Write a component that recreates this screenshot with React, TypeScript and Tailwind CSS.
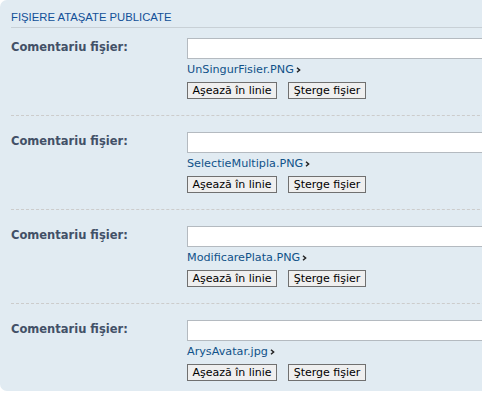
import React from 'react';

const files = [
  'UnSingurFisier.PNG',
  'SelectieMultipla.PNG',
  'ModificarePlata.PNG',
  'ArysAvatar.jpg',
];

function Arrow() {
  return (
    <svg width="5" height="6" viewBox="0 0 5 6" className="ml-[2px] inline-block">
      <path d="M1 0.8 L3.6 3 L1 5.2" fill="none" stroke="#222" strokeWidth="1.5" />
    </svg>
  );
}

function AttachRow({ name, first, last }: { name: string; first: boolean; last: boolean }) {
  return (
    <div
      className={
        'flex ' +
        (first ? 'pt-[10px] ' : 'pt-[16px] border-t border-dashed border-[#cccccc] ') +
        (last ? 'pb-[10px]' : 'pb-[16px]')
      }
    >
      {/* label */}
      <div className="w-[176px] shrink-0 pt-[2px] text-[11.5px] leading-[14px] font-bold text-[#425067]">
        Comentariu fişier:
      </div>

      {/* field + file + actions */}
      <div className="flex-1 flex flex-col">
        <input type="text" className="h-[21px] w-full bg-white border border-[#b4bac0] outline-none" />
        <div className="mt-[3px] h-[16px] flex items-center text-[11.2px] leading-[16px] text-[#105289]">
          <span>{name}</span>
          <Arrow />
        </div>
        <div className="mt-[4px] flex gap-[11px]">
          <button className="h-[17px] w-[90px] border border-[#707070] bg-[#efefef] text-[11px] leading-[15px] text-black">
            Aşează în linie
          </button>
          <button className="h-[17px] w-[78px] border border-[#707070] bg-[#efefef] text-[11px] leading-[15px] text-black">
            Şterge fişier
          </button>
        </div>
      </div>
    </div>
  );
}

export default function App() {
  return (
    <div className="w-[482px] h-[393px] overflow-hidden bg-white" style={{ fontFamily: '"DejaVu Sans", Verdana, sans-serif' }}>
      <div className="w-[520px] bg-[#e1ebf2] rounded-[7px] pl-[11px]">
        {/* Header */}
        <h3
          className="pt-[10px] pb-[3px] text-[11.3px] leading-[14px] uppercase text-[#115098] border-b border-[#c8d0d6]"
          style={{ fontFamily: '"Liberation Sans", Arial, sans-serif' }}
        >
          Fişiere ataşate publicate
        </h3>

        {files.map((f, i) => (
          <AttachRow key={f} name={f} first={i === 0} last={i === files.length - 1} />
        ))}
      </div>
    </div>
  );
}
